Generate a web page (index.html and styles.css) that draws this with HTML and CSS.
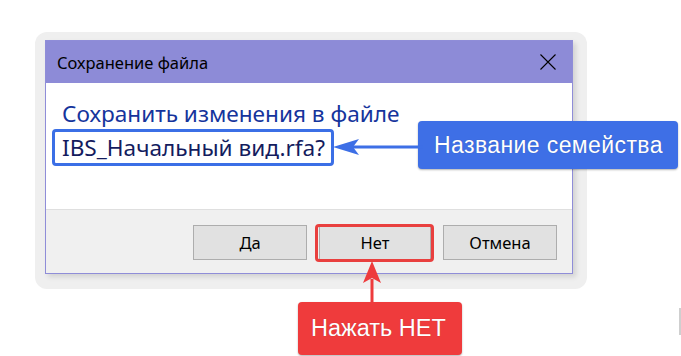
FILE: index.html
```html
<!DOCTYPE html>
<html lang="ru">

<head>
    <meta charset="UTF-8" />
    <title>Сохранение файла</title>
    <link rel="stylesheet" href="styles.css">
</head>

<body>
    <div class="frame">
        <div class="dialog">
            <div class="title-bar">
                <span>Сохранение файла</span>
                <svg class="close" width="16" height="16" viewBox="0 0 16 16">
                    <path d="M0.5 0.5 L15.5 15.5 M15.5 0.5 L0.5 15.5" stroke="#000" stroke-width="1.1" fill="none" />
                </svg>
            </div>
            <div class="content">
                <p class="line">Сохранить изменения в файле</p>
                <p class="line"><span class="name">IBS_Начальный вид.rfa?</span></p>
            </div>
            <div class="footer">
                <button>Да</button>
                <button class="marked">Нет</button>
                <button>Отмена</button>
            </div>
        </div>
    </div>

    <!-- подсказки поверх окна -->
    <div class="note note-blue">Название семейства</div>
    <svg class="arrow arrow-blue" width="90" height="20" viewBox="0 0 90 20">
        <path d="M20 10 H90" stroke="#3d6fe6" stroke-width="3" />
        <path d="M0 10 L26 2 L20 10 L26 18 Z" fill="#3d6fe6" />
    </svg>
    <svg class="arrow arrow-red" width="20" height="42" viewBox="0 0 20 42">
        <path d="M10 18 V42" stroke="#ee3b3c" stroke-width="3" />
        <path d="M10 0 L19 22 L10 17 L1 22 Z" fill="#ee3b3c" />
    </svg>
    <div class="note note-red">Нажать НЕТ</div>
    <div class="scroll-mark"></div>
</body>

</html>
```

FILE: styles.css
```css
html,
body {
    margin: 0;
    padding: 0;
    height: 100%;
}

body {
    background-color: white;
    position: relative;
    overflow: hidden;
    font-family: "Noto Sans", "Open Sans", sans-serif;
}

.frame {
    margin: 32px 0 0 35px;
    width: 528px;
    padding: 8px 14px 15px 10px;
    background-color: #efefef;
    border-radius: 12px;
}

.dialog {
    border: 1px solid #8f8dd8;
    background-color: white;
    box-shadow: 3px 3px 5px rgba(0, 0, 0, 0.12);
}

.title-bar {
    display: flex;
    align-items: center;
    justify-content: space-between;
    height: 42px;
    padding: 0 16px 0 11px;
    background-color: #8d8bd7;
    font-size: 16.5px;
    color: #000;
}

.content {
    height: 126px;
    box-sizing: border-box;
    padding: 15px 0 0 7px;
}

.line {
    margin: 0;
    font-size: 22.6px;
    line-height: 31px;
    color: #15349c;
    padding-left: 9px;
}

.name {
    display: inline-block;
    margin-left: -10px;
    padding: 0 6px 0 7px;
    border: 3px solid #3b6fe6;
    border-radius: 4px;
    line-height: 31px;
    color: #141c5e;
}

.footer {
    display: flex;
    justify-content: flex-end;
    gap: 12px;
    height: 64px;
    box-sizing: border-box;
    padding: 15px 15px 0 0;
    background-color: #f0f0f0;
    border-top: 1px solid #dfdfdf;
}

.footer button {
    width: 114px;
    height: 35px;
    border: 1px solid #adadad;
    background-color: #e1e1e1;
    font-family: "Noto Sans", "Open Sans", sans-serif;
    font-size: 16.5px;
    color: #000;
    padding: 0;
}

.footer button.marked {
    position: relative;
    width: 112px;
}

.footer button.marked::after {
    content: "";
    position: absolute;
    left: -5px;
    right: -4px;
    top: -2px;
    bottom: -3px;
    border: 3px solid #e9403f;
    border-radius: 4px;
}

.note {
    position: absolute;
    box-sizing: border-box;
    color: white;
    font-family: "Liberation Sans", Arial, sans-serif;
    white-space: nowrap;
    border-radius: 4px;
    display: flex;
    align-items: center;
    text-shadow: 0 0 1px rgba(0, 0, 0, 0.25);
    box-shadow: 0 1px 2px rgba(0, 0, 0, 0.3);
}

.note-blue {
    left: 418px;
    top: 121px;
    width: 260px;
    height: 48px;
    padding-left: 16px;
    background-color: #3e6fe6;
    font-size: 23px;
    letter-spacing: 0.4px;
}

.note-red {
    left: 298px;
    top: 302px;
    width: 164px;
    height: 53px;
    padding-left: 13px;
    background-color: #ef3b3c;
    font-size: 23.5px;
}

.arrow {
    position: absolute;
}

.arrow-blue {
    left: 333px;
    top: 137px;
}

.arrow-red {
    left: 362px;
    top: 261px;
}

.scroll-mark {
    position: absolute;
    left: 679px;
    top: 308px;
    width: 2px;
    height: 27px;
    background-color: #cfcfcf;
}
```
